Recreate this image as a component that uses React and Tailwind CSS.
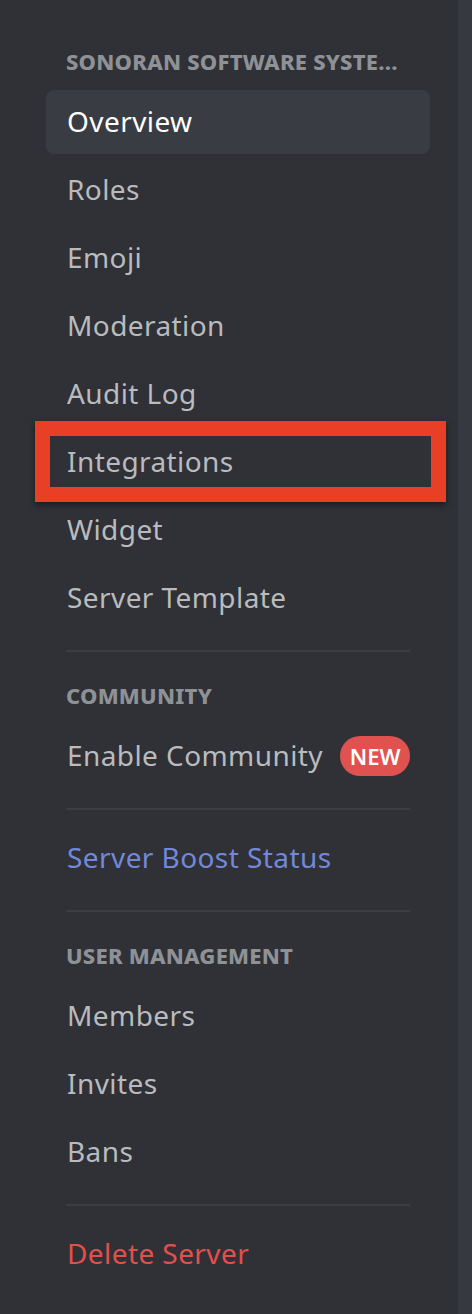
const sections = [
  {
    header: "SONORAN SOFTWARE SYSTE...",
    items: [
      { label: "Overview", selected: true },
      { label: "Roles" },
      { label: "Emoji" },
      { label: "Moderation" },
      { label: "Audit Log" },
      { label: "Integrations", highlighted: true },
      { label: "Widget" },
      { label: "Server Template" },
    ],
  },
  { header: "COMMUNITY", items: [{ label: "Enable Community", badge: "NEW" }] },
  { items: [{ label: "Server Boost Status", tone: "boost" }] },
  { header: "USER MANAGEMENT", items: [{ label: "Members" }, { label: "Invites" }, { label: "Bans" }] },
  { items: [{ label: "Delete Server", tone: "danger" }] },
];

function Item({ label, selected, highlighted, badge, tone }) {
  const color = selected
    ? "text-white"
    : tone === "boost"
    ? "text-[#7289da]"
    : tone === "danger"
    ? "text-[#e2504d]"
    : "text-[#b9bbbe]";
  return (
    <div
      className={
        "relative flex items-center min-w-0 h-16 mb-1 px-[21px] rounded-lg " + (selected ? "bg-[#3a3c43]" : "")
      }
    >
      <span className={"shrink-0 whitespace-nowrap text-[28px] leading-none tracking-[0.015em] -mt-[3px] " + color}>
        {label}
      </span>
      {badge && (
        <span className="shrink-0 ml-[17px] flex items-center justify-center w-[70px] h-10 rounded-full bg-[#e0524f] text-white text-[22px] font-semibold">
          {badge}
        </span>
      )}
      {highlighted && (
        <div className="absolute -top-[9px] -bottom-[8px] -left-[11px] -right-[16px] border-[15px] border-[#ea3f27] shadow-[0_3px_6px_rgba(0,0,0,0.45)]" />
      )}
    </div>
  );
}

export default function App() {
  return (
    <div className="flex w-[472px] h-[1314px] bg-[#2f3136] overflow-hidden" style={{ fontFamily: '"Noto Sans", sans-serif' }}>
      <div className="flex-1 min-w-0 pt-[34px] pl-[46px] pr-[28px]">
        <div className="flex flex-col w-[384px]">
          {sections.map((section, index) => (
            <div key={index} className="flex flex-col min-w-0">
              {index > 0 && <div className="mx-5 mt-4 mb-4 h-[2px] bg-[#3b3d43]" />}
              {section.header && (
                <div className="pt-[15px] pb-[17px] px-5">
                  <p className="h-6 leading-6 text-[22px] font-extrabold tracking-[0.01em] text-[#8e9297] whitespace-nowrap">
                    {section.header}
                  </p>
                </div>
              )}
              {section.items.map((item) => (
                <Item key={item.label} {...item} />
              ))}
            </div>
          ))}
        </div>
      </div>
      <div className="w-[14px] bg-[#36393f]" />
    </div>
  );
}
